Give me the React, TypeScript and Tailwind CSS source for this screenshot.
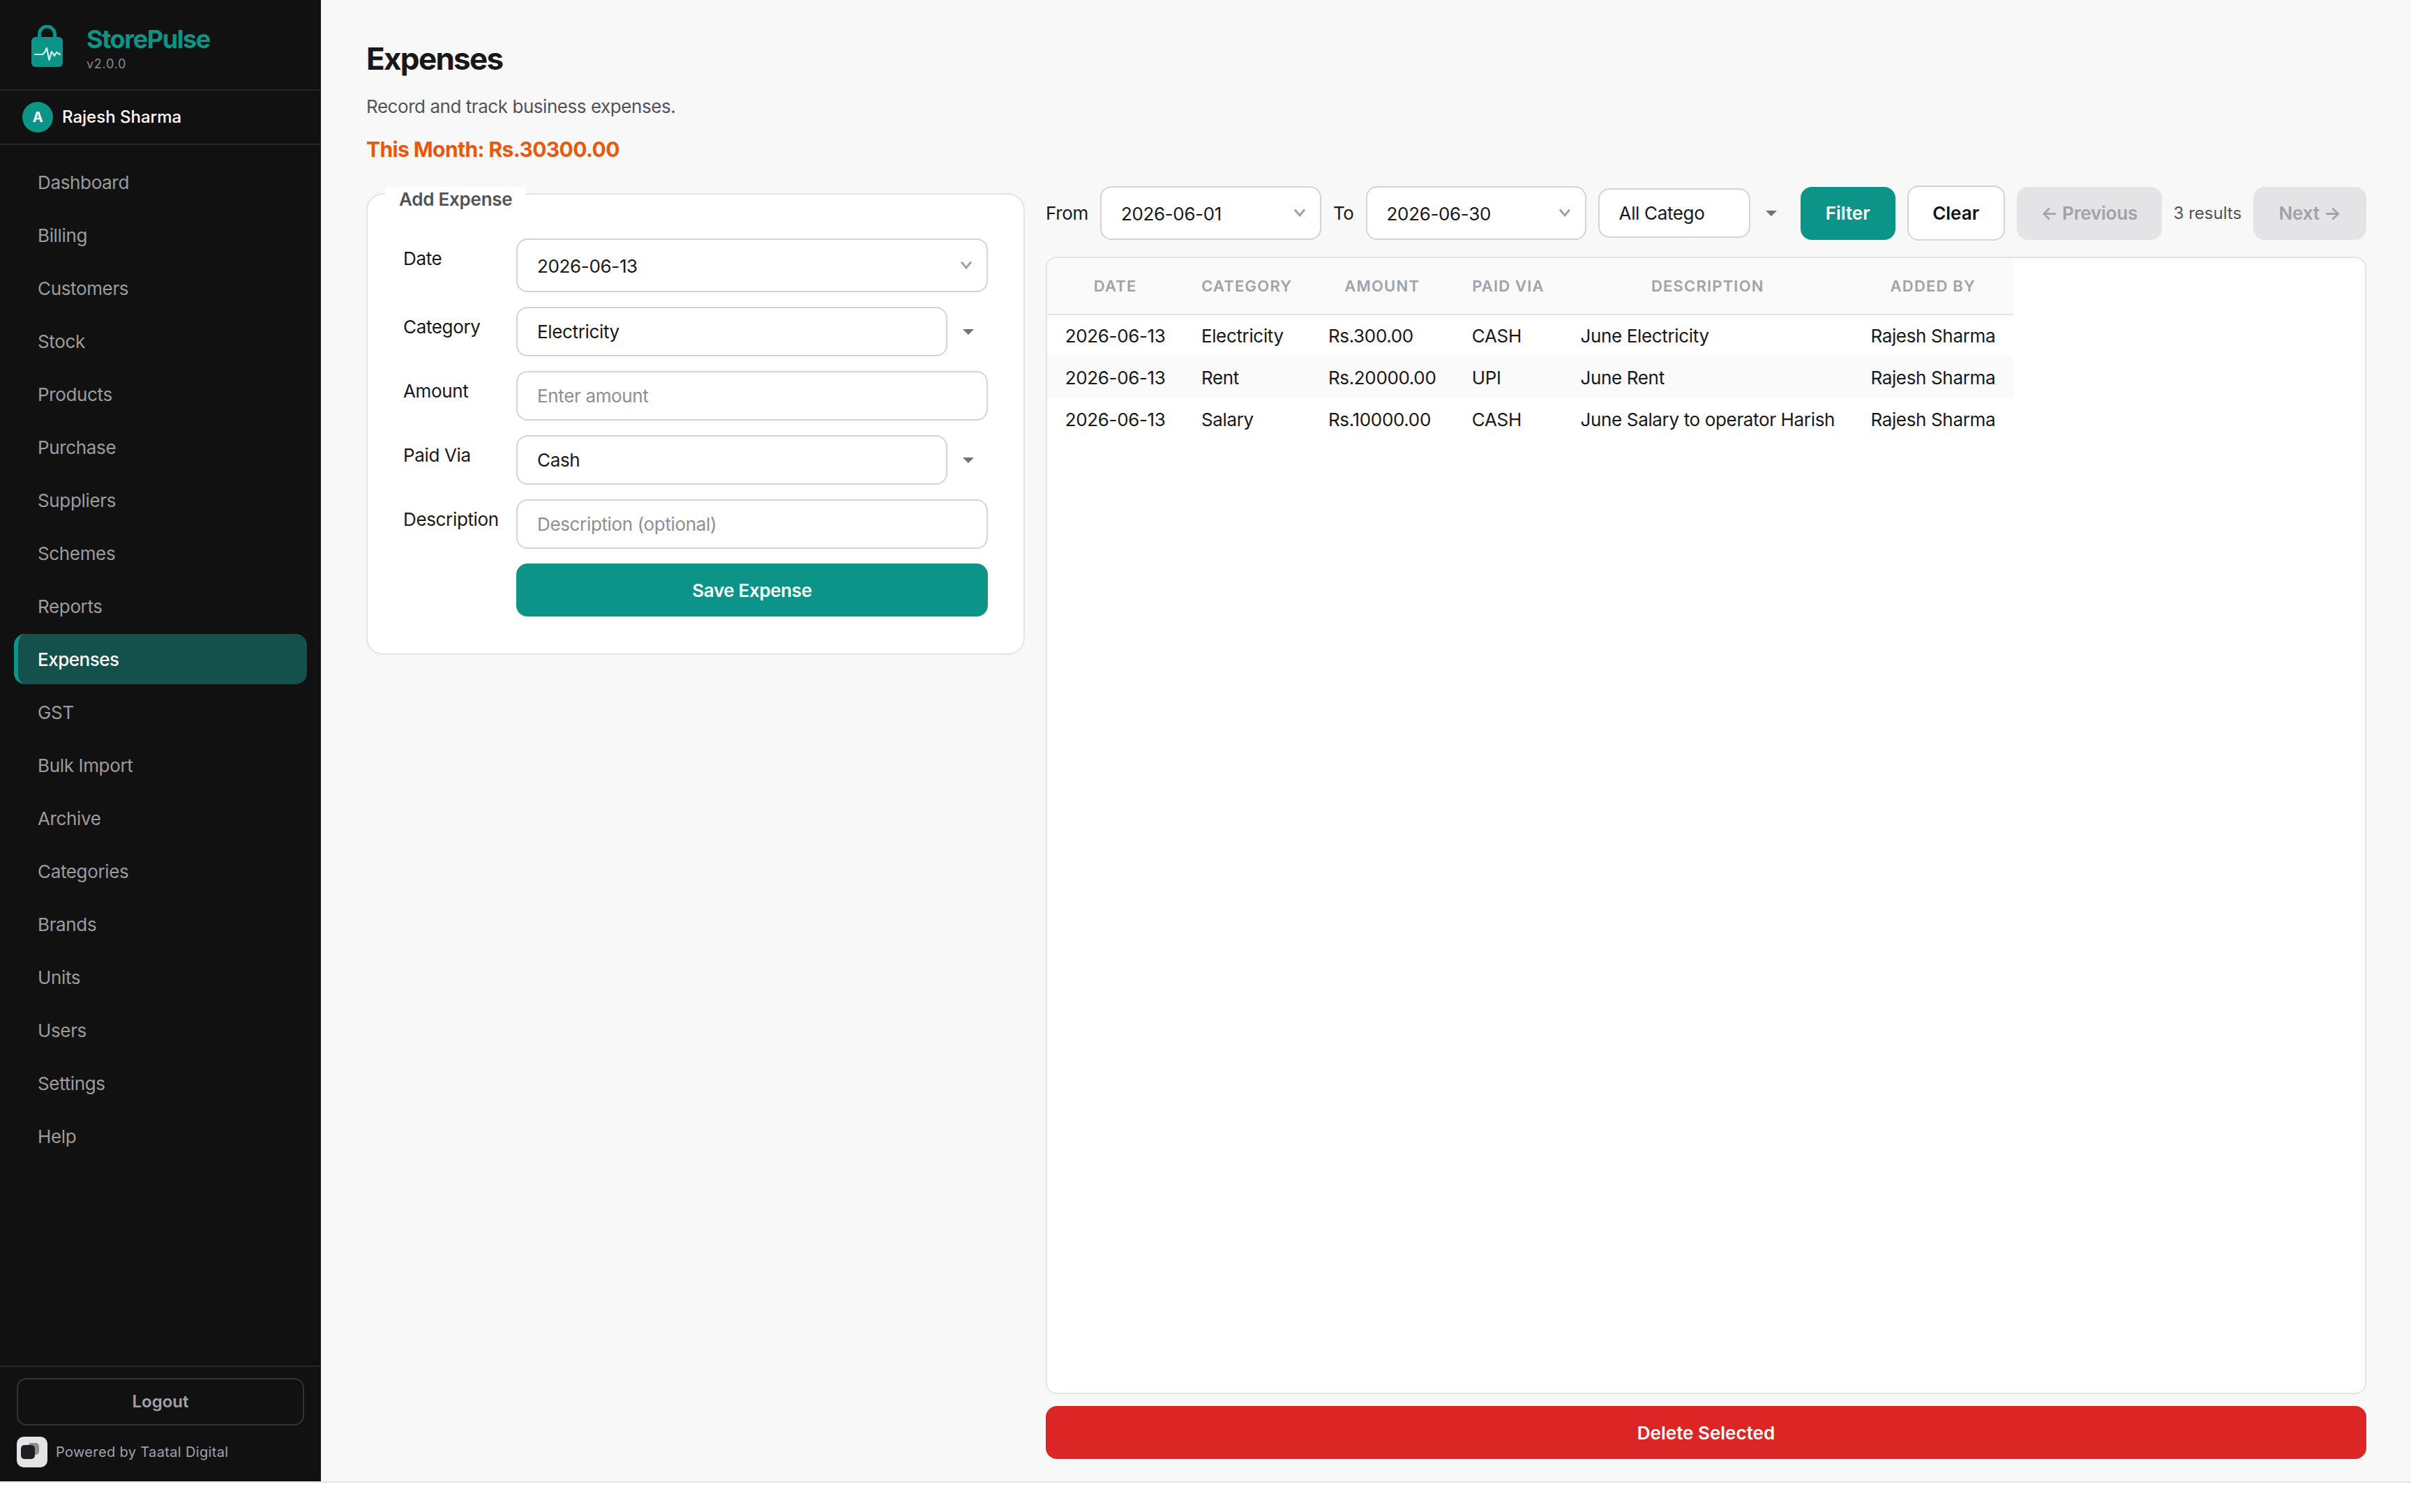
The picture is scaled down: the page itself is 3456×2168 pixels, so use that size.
import React from "react";

const nav = ["Dashboard","Billing","Customers","Stock","Products","Purchase","Suppliers","Schemes","Reports","Expenses","GST","Bulk Import","Archive","Categories","Brands","Units","Users","Settings","Help"];
const rows = [
  ["2026-06-13","Electricity","Rs.300.00","CASH","June Electricity","Rajesh Sharma"],
  ["2026-06-13","Rent","Rs.20000.00","UPI","June Rent","Rajesh Sharma"],
  ["2026-06-13","Salary","Rs.10000.00","CASH","June Salary to operator Harish","Rajesh Sharma"],
];
const heads = ["Date","Category","Amount","Paid Via","Description","Added By"];

function Chevron() {
  return (
    <svg width="18" height="14" viewBox="0 0 18 14" className="shrink-0">
      <path d="M2 2.5 L9 11 L16 2.5" fill="none" stroke="#a1a1aa" strokeWidth="3" />
    </svg>
  );
}
function Tri() {
  return (
    <svg width="16" height="8" viewBox="0 0 16 8" className="shrink-0">
      <path d="M0 0 H16 L8 8 Z" fill="#71717a" />
    </svg>
  );
}
function DateBox({ value, className }: { value: string; className: string }) {
  return (
    <div className={`flex h-[77px] items-center justify-between rounded-[16px] border-2 border-[#d4d4d8] bg-white pl-[28px] pr-[20px] text-[26px] text-[#18181b] ${className}`}>
      <span className="mt-[1px]">{value}</span>
      <span className="-mt-[2px]"><Chevron /></span>
    </div>
  );
}
function Select({ value, selectClass, wrapClass }: { value: string; selectClass: string; wrapClass: string }) {
  return (
    <div className={`flex items-center ${wrapClass}`}>
      <div className={`flex h-[71px] items-center rounded-[16px] border-2 border-[#d4d4d8] bg-white pl-[28px] text-[26px] text-[#18181b] ${selectClass}`}>{value}</div>
      <span className="ml-[22px] flex"><Tri /></span>
    </div>
  );
}
function TextBox({ placeholder }: { placeholder: string }) {
  return (
    <input
      placeholder={placeholder}
      className="h-[71px] w-full rounded-[16px] border-2 border-[#d4d4d8] bg-white pl-[28px] text-[26px] text-[#18181b] outline-none placeholder:text-[#8e8e93]"
    />
  );
}
function Label({ children }: { children: React.ReactNode }) {
  return <div className="pt-[9px] text-[26px] leading-[39px] text-[#18181b]">{children}</div>;
}

export default function App() {
  return (
    <div className="flex h-[2126px] border-b-2 border-[#e4e4e7] bg-[#f8f8f8] tracking-[-0.35px] [font-family:Inter,sans-serif]">
      <aside className="flex w-[460px] shrink-0 flex-col bg-[#111111]">
        <div className="flex h-[130px] items-start border-b-2 border-[#262626] pl-[45px] pt-[36px]">
          <svg width="45" height="60" viewBox="0 0 45 60" className="shrink-0">
            <path d="M11.5 20 V13 A11 11 0 0 1 33.5 13 V20" fill="none" stroke="#0d9488" strokeWidth="5" />
            <rect x="0" y="17" width="45" height="43" rx="6" fill="#0d9488" />
            <path d="M5 42 H16 L19 39 L22 33 L25.5 50 L29 38 L33 44 L36 39 L41 42" fill="none" stroke="#d9f2ee" strokeWidth="2.2" strokeLinejoin="round" strokeLinecap="round" />
          </svg>
          <div className="ml-[34px] flex flex-col">
            <div className="-mt-[2px] text-[36px] font-bold leading-[44px] tracking-[-1.4px] text-[#0d9488]">StorePulse</div>
            <div className="mt-[3px] text-[18px] leading-[22px] tracking-[0.7px] text-[#8a8a92]">v2.0.0</div>
          </div>
        </div>
        <div className="flex h-[78px] items-center gap-[13px] border-b-2 border-[#262626] pl-[32px]">
          <div className="flex h-[44px] w-[44px] items-center justify-center rounded-full bg-[#0d9488] text-[20px] font-bold text-white">A</div>
          <div className="text-[24px] font-medium tracking-normal text-white">Rajesh Sharma</div>
        </div>
        <nav className="flex flex-1 flex-col gap-[4px] px-[20px] pt-[17px]">
          {nav.map((n) =>
            n === "Expenses" ? (
              <div key={n} className="flex h-[72px] items-center rounded-[16px] border-l-[6px] border-[#0d9488] bg-[#14504c] pl-[28px] text-[26px] font-medium tracking-[-0.5px] text-white">{n}</div>
            ) : (
              <div key={n} className="flex h-[72px] items-center pl-[34px] text-[26px] text-[#9c9c9c]">{n}</div>
            )
          )}
        </nav>
        <div className="border-t-2 border-[#262626] px-[24px] pt-[16px]">
          <div className="flex h-[68px] items-center justify-center rounded-[14px] border-2 border-[#333333] text-[24px] font-semibold tracking-normal text-[#a1a1aa]">Logout</div>
          <div className="mt-[16px] flex h-[44px] items-center gap-[12px]">
            <svg width="44" height="44" viewBox="0 0 44 44" className="shrink-0">
              <rect width="44" height="44" rx="10" fill="#e4e4e7" />
              <rect x="16" y="9" width="16" height="17" rx="5" fill="#8c8c8c" />
              <rect x="6" y="12" width="20" height="20" rx="5" fill="#1f1f23" />
            </svg>
            <span className="text-[20px] tracking-[0.35px] text-[#a1a1aa]">Powered by Taatal Digital</span>
          </div>
          <div className="h-[20px]" />
        </div>
      </aside>
      <main className="flex min-w-0 flex-1 flex-col pb-[32px] pl-[65px] pr-[64px] pt-[58px]">
        <h1 className="text-[44px] font-bold leading-[52px] tracking-[-1.7px] text-[#18181b]">Expenses</h1>
        <p className="mt-[23px] text-[26px] leading-[40px] tracking-[-0.45px] text-[#52525b]">Record and track business expenses.</p>
        <p className="mt-[21px] text-[30px] font-bold leading-[40px] tracking-[-0.6px] text-[#ea580c]">This Month: Rs.30300.00</p>
        <div className="mt-[32px] flex min-h-0 flex-1 gap-[30px]">
          <div className="mt-[11px] w-[944px] shrink-0 self-start">
            <div className="relative rounded-[24px] border-2 border-[#e4e4e7] bg-white pb-[53px] pl-[51px] pr-[51px] pt-[63px]">
              <div className="absolute -top-[11px] left-[25px] bg-white px-[20px] text-[26px] font-semibold leading-[36px] tracking-[-0.25px] text-[#52525b]">Add Expense</div>
              <div className="grid grid-cols-[138px_1fr] gap-x-[24px] gap-y-[21px]">
                <Label>Date</Label>
                <DateBox value="2026-06-13" className="w-full" />
                <Label>Category</Label>
                <Select value="Electricity" wrapClass="w-full" selectClass="w-[618px]" />
                <Label>Amount</Label>
                <TextBox placeholder="Enter amount" />
                <Label>Paid Via</Label>
                <Select value="Cash" wrapClass="w-full" selectClass="w-[618px]" />
                <Label>Description</Label>
                <TextBox placeholder="Description (optional)" />
                <div />
                <button className="h-[76px] rounded-[16px] bg-[#0d9488] text-[26px] font-semibold text-white">Save Expense</button>
              </div>
            </div>
          </div>
          <div className="flex min-w-0 flex-1 flex-col">
            <div className="flex h-[79px] items-center gap-[17px] text-[26px]">
              <span className="text-[#18181b]">From</span>
              <DateBox value="2026-06-01" className="w-[317px]" />
              <span className="text-[#18181b]">To</span>
              <DateBox value="2026-06-30" className="w-[316px]" />
              <Select value="All Catego" wrapClass="w-[273px]" selectClass="w-[218px]" />
              <button className="h-[76px] w-[136px] rounded-[16px] bg-[#0d9488] font-semibold tracking-normal text-white">Filter</button>
              <button className="h-[79px] w-[140px] rounded-[16px] border-2 border-[#d4d4d8] bg-white font-semibold tracking-normal text-[#111111]">Clear</button>
              <button className="h-[76px] w-[208px] rounded-[16px] bg-[#e4e4e7] font-semibold tracking-[-0.2px] text-[#a1a1aa]">← Previous</button>
              <span className="text-[24px] tracking-normal text-[#52525b]">3 results</span>
              <button className="h-[76px] flex-1 rounded-[16px] bg-[#e4e4e7] font-semibold tracking-[-0.2px] text-[#a1a1aa]">Next →</button>
            </div>
            <div className="mt-[23px] flex-1 overflow-hidden rounded-[16px] border-2 border-[#e4e4e7] bg-white">
              <table className="border-collapse text-[26px] text-[#18181b]">
                <thead>
                  <tr className="h-[81px] border-b-2 border-[#e4e4e7] bg-[#fafafa]">
                    {heads.map((h) => (
                      <th key={h} className="whitespace-nowrap px-[26px] text-center text-[22px] font-semibold uppercase tracking-[1.2px] text-[#a1a1aa]">{h}</th>
                    ))}
                  </tr>
                </thead>
                <tbody>
                  {rows.map((r, i) => (
                    <tr key={i} className={i === 1 ? "h-[60px] bg-[#fafafa]" : "h-[60px]"}>
                      {r.map((c, j) => (
                        <td key={j} className="whitespace-nowrap px-[25.7px]">{c}</td>
                      ))}
                    </tr>
                  ))}
                </tbody>
              </table>
            </div>
            <button className="mt-[17px] h-[76px] shrink-0 rounded-[16px] bg-[#dc2626] text-[26px] font-semibold tracking-normal text-white">Delete Selected</button>
          </div>
        </div>
      </main>
    </div>
  );
}
